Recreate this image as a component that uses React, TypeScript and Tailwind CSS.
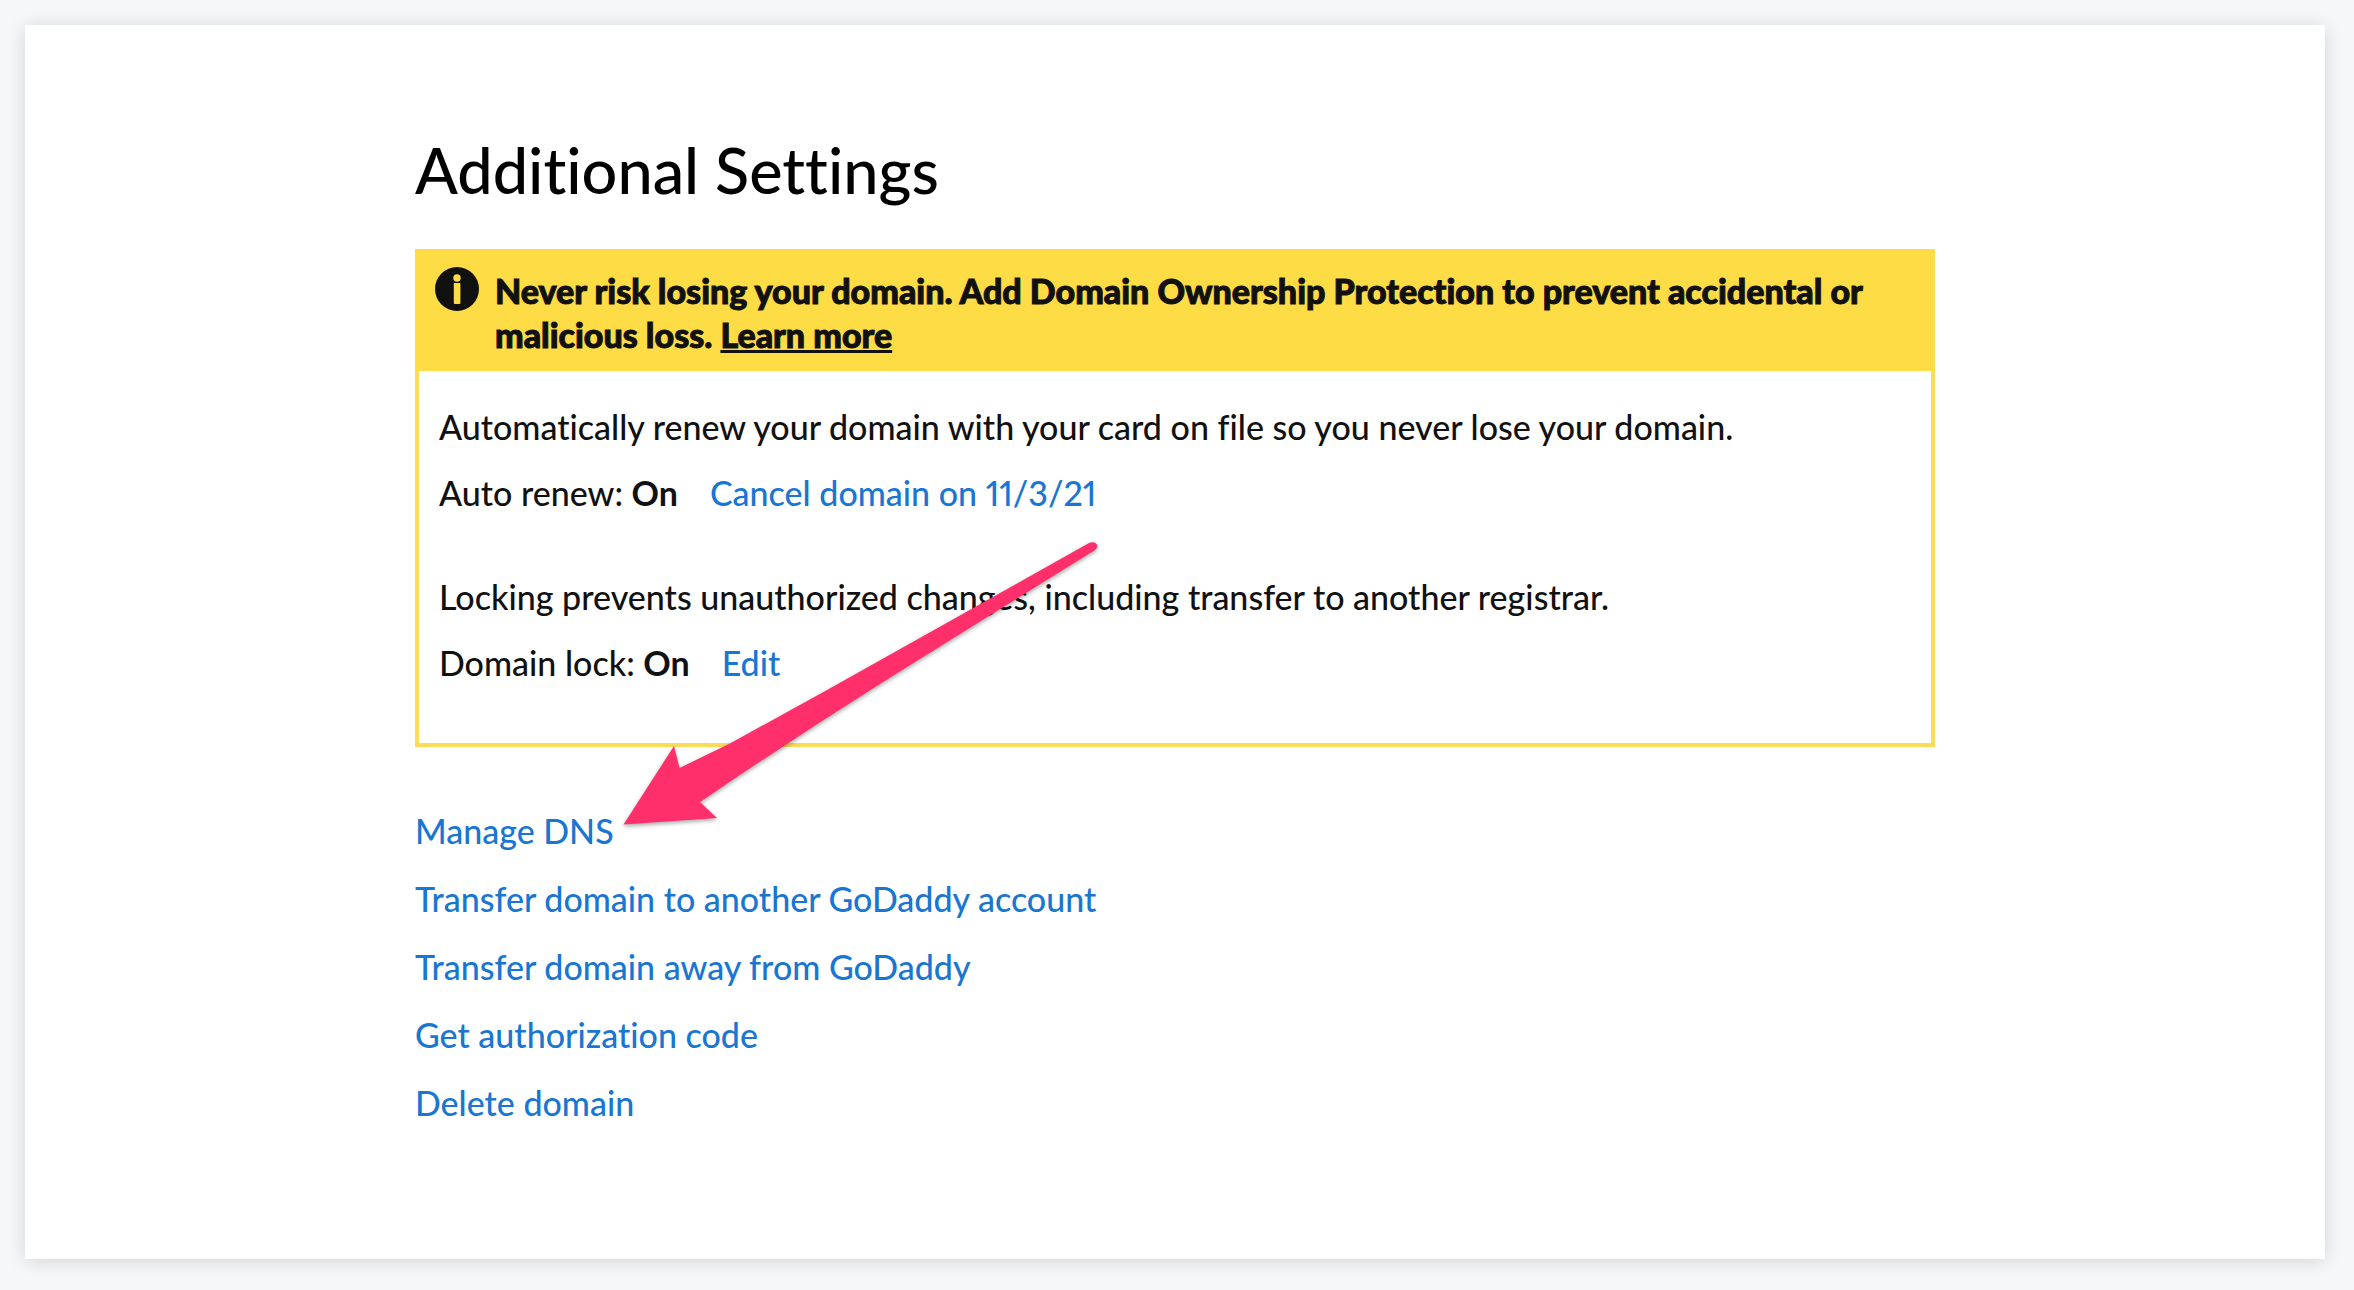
const BANNER_TEXT =
  'Never risk losing your domain. Add Domain Ownership Protection to prevent accidental or malicious loss.';

const SETTINGS = [
  {
    description: 'Automatically renew your domain with your card on file so you never lose your domain.',
    label: 'Auto renew:',
    value: 'On',
    action: 'Cancel domain on 11/3/21',
  },
  {
    description: 'Locking prevents unauthorized changes, including transfer to another registrar.',
    label: 'Domain lock:',
    value: 'On',
    action: 'Edit',
  },
];

const LINKS = [
  'Manage DNS',
  'Transfer domain to another GoDaddy account',
  'Transfer domain away from GoDaddy',
  'Get authorization code',
  'Delete domain',
];

// ── Icons ─────────────────────────────────────────────────────────────────────

function InfoIcon() {
  return (
    <svg viewBox="0 0 44 44" className="h-11 w-11 shrink-0" aria-hidden="true">
      <circle cx="22" cy="22" r="22" fill="#111" />
      <circle cx="22" cy="11" r="3.7" fill="#fedc45" />
      <rect x="18.8" y="16" width="6.6" height="21" rx="0.8" fill="#fedc45" />
    </svg>
  );
}

// Points at the Manage DNS link
function Arrow() {
  return (
    <svg
      viewBox="0 0 480 290"
      className="pointer-events-none absolute top-[291px] left-[205px] h-[290px] w-[480px] drop-shadow-[0_2px_2px_rgba(0,0,0,0.35)]"
      aria-hidden="true"
    >
      <path
        d="M3.5 284.5 54 206 59.5 228 Q84 216 109 204 L207 150 469 3 C476 0 480 6 475 10 L263 142 Q168 202 80 262 L97 278Z"
        fill="#ff2f6c"
      />
    </svg>
  );
}

// ── Sections ──────────────────────────────────────────────────────────────────

function SettingRow({ description, label, value, action }: (typeof SETTINGS)[number]) {
  return (
    <div className="flex flex-col gap-[22px]">
      <p>{description}</p>
      <p className="flex flex-wrap gap-x-8">
        <span>
          {label} <b className="font-bold">{value}</b>
        </span>
        <a href="#" className="text-[#1976d2] proportional-nums">
          {action}
        </a>
      </p>
    </div>
  );
}

export default function App() {
  return (
    <div className="min-h-screen bg-[#f5f7f8] pt-[25px] pr-[29px] pb-[31px] pl-[25px] font-['Lato',sans-serif] text-[34px] leading-[44px] font-medium text-[#111] [font-variant-ligatures:no-common-ligatures]">
      <main className="bg-white px-6 pt-[109px] pb-[134px] shadow-[0_2px_18px_rgba(0,0,0,0.14)]">
        <div className="mx-auto max-w-[1520px]">
          <h1 className="mb-[43px] text-[63px] leading-[72px] text-black">Additional Settings</h1>

          <div className="relative">
            <section className="border-4 border-[#fadc58]">
              <div className="-mx-1 -mt-1 flex gap-4 bg-[#fedc45] pt-[18px] pr-10 pb-[14px] pl-5">
                <InfoIcon />
                <p className="pt-[2px] font-black [-webkit-text-stroke:1px_#111]">
                  {BANNER_TEXT}{' '}
                  <a href="#" className="underline">
                    Learn more
                  </a>
                </p>
              </div>
              <div className="flex flex-col gap-[60px] px-5 pt-[34px] pb-[58px]">
                {SETTINGS.map((s) => (
                  <SettingRow key={s.label} {...s} />
                ))}
              </div>
            </section>

            <ul className="mt-[62px] flex flex-col gap-6">
              {LINKS.map((link) => (
                <li key={link}>
                  <a href="#" className="text-[#1976d2]">
                    {link}
                  </a>
                </li>
              ))}
            </ul>

            <Arrow />
          </div>
        </div>
      </main>
    </div>
  );
}
